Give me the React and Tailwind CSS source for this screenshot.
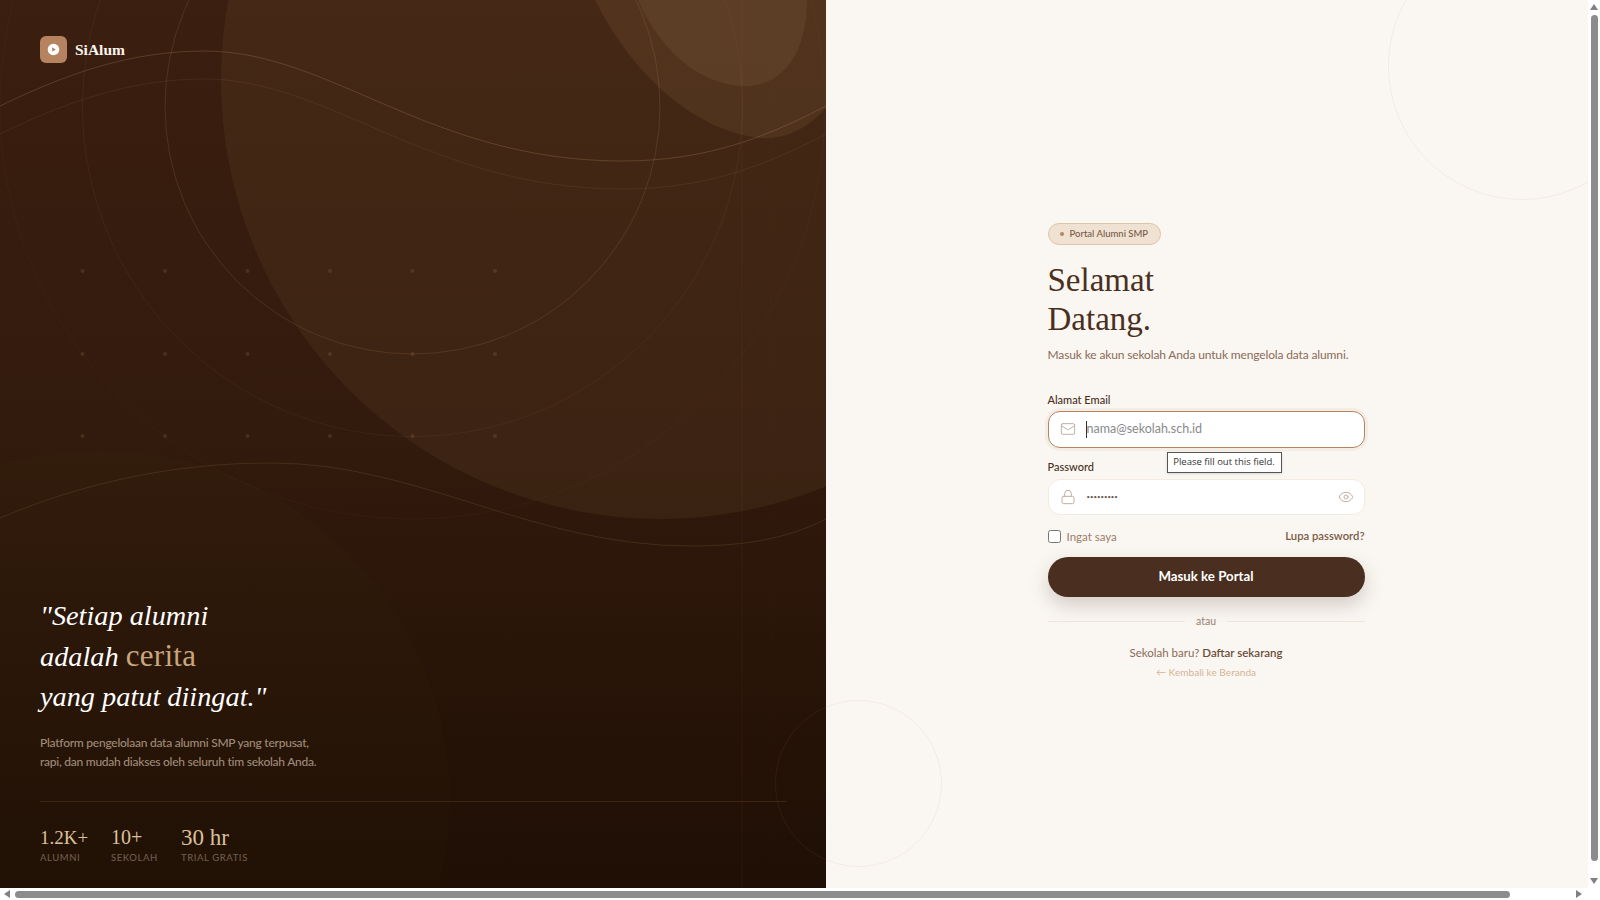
import React from 'react';
import { Mail, Lock, Eye } from 'lucide-react';

const STATS = [
  { value: '1.2K+', label: 'Alumni', width: 'w-[47px]', size: 'text-[19px]' },
  { value: '10+', label: 'Sekolah', width: 'w-[46px]', size: 'text-[20px]' },
  { value: '30 hr', label: 'Trial Gratis', width: 'w-[68px]', size: 'text-[23px]' },
];

const DOT_X = [82.5, 165, 247.5, 330, 412.5, 495];
const DOT_Y = [271, 354, 436];

function LeftDecor() {
  return (
    <svg className="absolute inset-0 h-full w-full" viewBox="0 0 826 888" fill="none" aria-hidden="true">
      {/* blobs */}
      <circle cx="660" cy="80" r="439" fill="#c49a6c" fillOpacity="0.08" />
      <path d="M595 0 C630 70 690 130 760 138 C790 140 810 125 826 108 L826 0 Z" fill="#c49a6c" fillOpacity="0.1" />
      <path d="M638 0 C660 50 700 86 745 86 C785 86 807 50 807 0 Z" fill="#c49a6c" fillOpacity="0.1" />
      <circle cx="100" cy="800" r="350" fill="#5a5a20" fillOpacity="0.03" />

      {/* rings */}
      <circle cx="412.5" cy="106.5" r="247.5" stroke="#c49a6c" strokeOpacity="0.16" />
      <circle cx="412.5" cy="106.5" r="330" stroke="#c49a6c" strokeOpacity="0.07" />
      <circle cx="412.5" cy="106.5" r="412.5" stroke="#c49a6c" strokeOpacity="0.04" />
      <line x1="742" y1="0" x2="742" y2="888" stroke="#c49a6c" strokeOpacity="0.06" />
      <line x1="771" y1="0" x2="771" y2="888" stroke="#c49a6c" strokeOpacity="0.025" />

      {/* waves */}
      <path d="M0 106 C66 74 130 51 205 51 C330 51 430 161 622 161 C710 161 770 135 826 106" stroke="#c49a6c" strokeOpacity="0.24" />
      <path d="M0 134 C66 102 130 79 205 79 C330 79 430 189 622 189 C710 189 770 163 826 134" stroke="#c49a6c" strokeOpacity="0.1" />
      <path d="M0 518 C85 482 175 463 271 463 C420 463 530 546 691 546 C740 546 785 540 826 519" stroke="#c49a6c" strokeOpacity="0.15" />

      {DOT_Y.map((y) => DOT_X.map((x) => <circle key={`${x}-${y}`} cx={x} cy={y} r="2" fill="#c49a6c" fillOpacity="0.16" />))}
    </svg>
  );
}

function ArrowUp() {
  return <svg width="8" height="6" viewBox="0 0 8 6"><path d="M0 6 L4 0 L8 6 Z" fill="#808080" /></svg>;
}
function ArrowDown() {
  return <svg width="8" height="6" viewBox="0 0 8 6"><path d="M0 0 L8 0 L4 6 Z" fill="#808080" /></svg>;
}
function ArrowLeft() {
  return <svg width="6" height="8" viewBox="0 0 6 8"><path d="M6 0 L6 8 L0 4 Z" fill="#808080" /></svg>;
}
function ArrowRight() {
  return <svg width="6" height="8" viewBox="0 0 6 8"><path d="M0 0 L6 4 L0 8 Z" fill="#808080" /></svg>;
}

export default function App() {
  const sans = 'font-["Lato",sans-serif]';
  const serif = 'font-["Liberation_Serif",serif]';

  return (
    <div className="flex h-screen w-full flex-col overflow-hidden bg-white">
      <div className="flex min-h-0 flex-1">
        <main className="relative flex min-w-0 flex-1 overflow-hidden bg-[#faf7f2]">

          {/* ── Left panel ── */}
          <section className="relative flex w-[826px] shrink-0 flex-col justify-between overflow-hidden bg-linear-to-b from-[#3b1f10] via-[#321a0c] to-[#1f0f05] px-10 pt-9 pb-[23px]">
            <LeftDecor />

            <div className="relative flex items-center gap-2">
              <div className="flex h-[27px] w-[27px] items-center justify-center rounded-[6px] bg-[#b5835f]">
                <svg width="13" height="13" viewBox="0 0 13 13">
                  <circle cx="6.5" cy="6.5" r="5.8" fill="#fff" />
                  <path d="M5.2 4.2 L8.8 6.5 L5.2 8.8 Z" fill="#b5835f" />
                </svg>
              </div>
              <span className={`${serif} text-[15.5px] font-bold text-[#faf4ec]`}>SiAlum</span>
            </div>

            <div className="relative">
              <blockquote className={`${serif} text-[28.3px] leading-[40px] text-white italic`}>
                "Setiap alumni<br />
                adalah <span className="text-[31px] tracking-[0.3px] text-[#c9a67e] not-italic">cerita</span><br />
                yang patut diingat."
              </blockquote>
              <p className={`${sans} mt-[16px] text-[12px] leading-[19px] font-medium tracking-[-0.25px] text-[#a08a78]`}>
                Platform pengelolaan data alumni SMP yang terpusat,<br />
                rapi, dan mudah diakses oleh seluruh tim sekolah Anda.
              </p>

              <div className="mt-[30px] flex gap-6 border-t border-[#3d2414] pt-[22px]">
                {STATS.map((s) => (
                  <div key={s.label} className={s.width}>
                    <div className={`${serif} ${s.size} leading-[27px] whitespace-nowrap text-[#dcc09a]`}>{s.value}</div>
                    <div className={`${sans} text-[9.5px] leading-[14px] font-medium tracking-[0.06em] whitespace-nowrap text-[#6f5c4d] uppercase`}>{s.label}</div>
                  </div>
                ))}
              </div>
            </div>
          </section>

          {/* ── Right panel ── */}
          <section className="relative flex min-w-0 flex-1 items-center justify-center pr-[2px]">
            <div className="absolute top-[-68px] left-[562px] h-[268px] w-[268px] rounded-full border border-[#b5835f]/10" />

            <div className={`${sans} relative w-[317px] pt-[10px]`}>
              <div className="inline-flex h-[22px] w-[113px] items-center gap-[6px] rounded-full border border-[#e0c4a6] bg-[#f0e2d3] pl-[11px]">
                <span className="h-[4px] w-[4px] rounded-full bg-[#b5835f]" />
                <span className="text-[9.5px] font-medium whitespace-nowrap text-[#7a5a45]">Portal Alumni SMP</span>
              </div>

              <h1 className={`${serif} mt-[16px] text-[33px] leading-[39px] font-normal text-[#4a2f20]`}>
                Selamat<br />Datang.
              </h1>
              <p className="mt-[7px] text-[12px] leading-[18px] tracking-[-0.14px] whitespace-nowrap text-[#8a6a58]">
                Masuk ke akun sekolah Anda untuk mengelola data alumni.
              </p>

              {/* Email */}
              <label className="mt-[28px] block text-[11px] leading-[16px] font-medium text-[#4a3022]">Alamat Email</label>
              <div className="relative mt-[3px]">
                <div className="flex h-[37px] items-center gap-[11px] rounded-xl border border-[#b5835f] bg-white pl-[11px] shadow-[0_0_0_3px_rgba(181,131,95,0.08)]">
                  <Mail size={16} strokeWidth={1.5} className="shrink-0 text-[#bfb0a4]" />
                  <input
                    type="email"
                    placeholder="nama@sekolah.sch.id"
                    className="w-full bg-transparent text-[12.5px] outline-none placeholder:text-[#8a8a8a]"
                  />
                </div>
                <span className="absolute top-[10px] left-[38px] h-[17px] w-px bg-[#333]" />
                {/* Browser validation bubble */}
                <div className="absolute top-[41px] left-[119px] z-10 flex h-[21px] w-[115px] items-center justify-center border-[1.5px] border-[#555] bg-white font-['Open_Sans',sans-serif] text-[9.5px] whitespace-nowrap text-[#333] shadow-sm">
                  Please fill out this field.
                </div>
              </div>

              {/* Password */}
              <label className="mt-[11px] block text-[11px] leading-[16px] font-medium text-[#4a3022]">Password</label>
              <div className="mt-[4px] flex h-[36px] items-center gap-[11px] rounded-xl border border-[#f3eae0] bg-white pr-[10px] pl-[11px]">
                <Lock size={16} strokeWidth={1.5} className="shrink-0 text-[#bfb0a4]" />
                <span className="flex-1 text-[6px] text-[#6b5a4e]">•••••••••</span>
                <Eye size={16} strokeWidth={1.5} className="shrink-0 text-[#bfb0a4]" />
              </div>

              <div className="mt-[13px] flex items-center justify-between">
                <label className="flex items-center gap-[6px] text-[11.5px] text-[#9a7e6c]">
                  <input type="checkbox" className="m-0 h-[13px] w-[13px]" />
                  Ingat saya
                </label>
                <a className="text-[11.25px] font-semibold text-[#7a5a45]">Lupa password?</a>
              </div>

              <button className="mt-[12px] h-[40px] w-full rounded-full bg-[#4a2f20] text-[13.25px] font-bold text-white shadow-[0_8px_20px_rgba(74,47,32,0.22)]">
                Masuk ke Portal
              </button>

              <div className="mt-[17px] flex items-center gap-[11px]">
                <span className="h-px flex-1 bg-[#efe5d9]" />
                <span className="text-[10.5px] leading-[14px] text-[#9a8070]">atau</span>
                <span className="h-px flex-1 bg-[#efe5d9]" />
              </div>

              <p className="mt-[16px] text-center text-[11.5px] leading-[18px] text-[#8a6a58]">
                Sekolah baru? <a className="font-semibold text-[#6b4c38]">Daftar sekarang</a>
              </p>
              <p className="mt-[2px] text-center text-[10.1px] leading-[16px] text-[#d4b496]">← Kembali ke Beranda</p>
            </div>
          </section>

          {/* Ring that sits across both panels */}
          <div className="absolute top-[700px] left-[775px] h-[167px] w-[167px] rounded-full border border-[#b5835f]/10" />
        </main>

        {/* Vertical scrollbar */}
        <div className="flex w-3 shrink-0 flex-col items-center bg-white">
          <div className="flex h-[14px] items-center justify-center"><ArrowUp /></div>
          <div className="mt-px h-[846px] w-[7px] rounded-full bg-[#8c8c8c]" />
          <div className="mt-auto flex h-[14px] items-center justify-center"><ArrowDown /></div>
        </div>
      </div>

      {/* Horizontal scrollbar */}
      <div className="flex h-3 shrink-0 items-center bg-white">
        <div className="flex w-[14px] items-center justify-center"><ArrowLeft /></div>
        <div className="ml-px h-[7px] w-[1495px] rounded-full bg-[#8c8c8c]" />
        <div className="ml-[62px] flex w-[14px] items-center justify-center"><ArrowRight /></div>
      </div>
    </div>
  );
}
